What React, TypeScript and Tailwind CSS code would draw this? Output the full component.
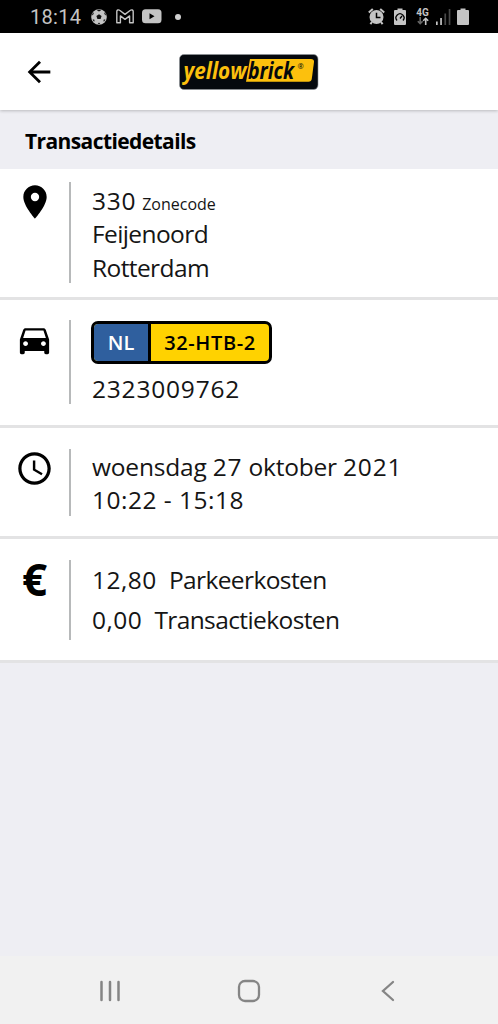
import React from 'react';
import { MdAccessTime, MdArrowBack, MdDirectionsCar, MdLocationOn } from 'react-icons/md';

function StatusBar() {
  return (
    <div className="h-[33px] shrink-0 bg-black text-[#c4c4c4] flex items-center justify-between pl-[30px] pr-[29px]">
      <div className="flex items-center">
        <span className="w-[53px] font-[Roboto,sans-serif] text-[20px] tracking-[0.3px] leading-none">18:14</span>
        <svg className="ml-[8px]" width="16" height="16" viewBox="0 0 16 16">
          <circle cx="8" cy="8" r="7.8" fill="currentColor" />
          <path d="M8 5.200l2.600 1.900-1 3H6.400l-1-3zM5.700 1.300L8 2.600l2.300-1.300L8 .8zM1 6.500l1.700-1.600-.2-1.600L1.200 5zM15 6.500l-1.700-1.600.2-1.600L14.800 5zM3.300 12.800l.2-2-1.900-.6.8 1.800zM12.700 12.800l-.2-2 1.900-.6-.8 1.800zM6.800 15L8 13.500 9.200 15z" fill="#111" />
        </svg>
        <svg className="ml-[9px]" width="18" height="15" viewBox="0 0 18 15" fill="none" stroke="currentColor" strokeWidth="1.400" strokeLinejoin="round">
          <path d="M.8 13.800V2.600C.8 1 2.500.4 3.600 1.300L9 5.400l5.400-4.100c1.100-.9 2.800-.3 2.800 1.300v11.200h-3.600V6.900L9 10.400 4.400 6.900v6.900z" />
        </svg>
        <svg className="ml-[8px]" width="20" height="15" viewBox="0 0 20 15">
          <rect y="0.300" width="19.500" height="14" rx="3.500" fill="currentColor" />
          <path d="M7.500 4.300v6l5-3z" fill="#000" />
        </svg>
        <span className="ml-[13px] size-[6px] rounded-full bg-[#d0d0d0]" />
      </div>
      <div className="flex items-center">
        <svg width="17" height="17" viewBox="0 0 17 17">
          <path d="M.8 4.600L4.800 1M16.200 4.600l-4-3.600M4 14l-1.600 2.200M13 14l1.600 2.200" stroke="currentColor" strokeWidth="2" />
          <circle cx="8.500" cy="9" r="7" fill="currentColor" />
          <path d="M8.500 4.800V9.500h4" fill="none" stroke="#000" strokeWidth="1.500" />
        </svg>
        <svg className="ml-[9px]" width="12" height="17" viewBox="0 0 12 17">
          <path d="M3.500.5h5V2H11a1 1 0 0 1 1 1v13a1 1 0 0 1-1 1H1a1 1 0 0 1-1-1V3a1 1 0 0 1 1-1h2.500z" fill="currentColor" />
          <path d="M3 12.500a4 4 0 1 1 6 0M6 10.500l2-2.500" fill="none" stroke="#000" strokeWidth="1.300" />
        </svg>
        <div className="ml-[10px] w-[13px] flex flex-col items-center">
          <span className="font-[Roboto,sans-serif] text-[10px] font-bold leading-[9px]">4G</span>
          <svg width="12" height="8" viewBox="0 0 12 8" fill="none" strokeWidth="1.600">
            <path d="M3.200 0v6.500M.8 4.200l2.400 2.400 2.400-2.400" stroke="#666" />
            <path d="M8.700 8V1.200M6.200 3.800l2.500-2.500 2.500 2.500" stroke="currentColor" />
          </svg>
        </div>
        <svg className="ml-[7px]" width="15" height="16" viewBox="0 0 15 16">
          <path d="M0 12.500h1.700V16H0zM4.200 9h1.700v7H4.200z" fill="currentColor" />
          <path d="M8.400 4.500h1.700V16H8.400zM12.700 0h1.700v16h-1.700z" fill="#484848" />
        </svg>
        <svg className="ml-[6px]" width="12" height="17" viewBox="0 0 12 17">
          <path d="M3.500.5h5V2H11a1 1 0 0 1 1 1v13a1 1 0 0 1-1 1H1a1 1 0 0 1-1-1V3a1 1 0 0 1 1-1h2.500z" fill="currentColor" />
        </svg>
      </div>
    </div>
  );
}

function Logo() {
  return (
    <svg width="140" height="36" viewBox="0 0 140 36" fontFamily="'Open Sans', sans-serif" fontWeight="700" fontStyle="italic">
      <rect x="0.500" y="0.500" width="138.500" height="35" rx="4.500" fill="#05090e" stroke="#8e9499" strokeWidth="0.600" />
      <path d="M71 5h61q3.300 0 3 3l-2.200 16.700q-.4 3-3.400 3H67z" fill="#fcc00d" />
      <text x="4.500" y="25" fontSize="22.500" textLength="63" lengthAdjust="spacingAndGlyphs" fill="#fcc00d">yellow</text>
      <text x="69" y="25" fontSize="22.500" textLength="46" lengthAdjust="spacingAndGlyphs" fill="#05090e">brick</text>
      <text x="118.500" y="15" fontSize="7.500" fontStyle="normal" fontWeight="400" fill="#05090e">®</text>
    </svg>
  );
}

function Num({ children }: { children: React.ReactNode }) {
  return <span className="tracking-[0.800px]">{children}</span>;
}

function Row({ icon, className, children }: { icon: React.ReactNode; className: string; children: React.ReactNode }) {
  return (
    <section className={`flex shrink-0 bg-white border-b-[3px] border-[#e3e3e4] ${className}`}>
      <div className="w-[69px] flex justify-center items-start">{icon}</div>
      <div className="flex-1 border-l-2 border-[#b7b9ba] pl-[21px] text-[24.500px] leading-[33.500px] tracking-[-0.600px] whitespace-nowrap">
        {children}
      </div>
    </section>
  );
}

function Cost({ amount, label }: { amount: string; label: string }) {
  return (
    <p className="-mt-px flex gap-[12px] leading-[41px]">
      <span className="tracking-[0.500px]">{amount}</span>
      <span>{label}</span>
    </p>
  );
}

function NavBar() {
  return (
    <nav className="mt-auto h-[68px] pt-[2px] shrink-0 bg-[#f1f1f1] flex justify-center items-center gap-[115px] text-[#858585]">
      <svg width="24" height="24" viewBox="0 0 24 24" stroke="currentColor" strokeWidth="2.500" strokeLinecap="round">
        <path d="M3.500 3v18M12 3v18M20.500 3v18" />
      </svg>
      <svg width="24" height="24" viewBox="0 0 24 24" fill="none" stroke="currentColor" strokeWidth="2.300">
        <rect x="2" y="2" width="20" height="20" rx="6" />
      </svg>
      <svg width="24" height="24" viewBox="0 0 24 24" fill="none" stroke="currentColor" strokeWidth="2.300" strokeLinecap="round">
        <path d="M17 3l-10 9 10 9" />
      </svg>
    </nav>
  );
}

export default function App() {
  return (
    <div className="w-full h-screen flex flex-col overflow-hidden bg-[#eeeef3] text-[#151515] font-[Open_Sans,sans-serif]">
      <StatusBar />
      <header className="h-[77px] shrink-0 bg-white shadow-[0_1px_3px_rgba(0,0,0,0.220)] z-10 grid grid-cols-[1fr_auto_1fr] items-center">
        <MdArrowBack className="ml-[22px] mt-px text-black" size={34} />
        <Logo />
      </header>
      <h1 className="h-[59px] shrink-0 pl-[25px] pt-[4px] flex items-center text-[21px] font-bold tracking-[-0.600px] text-black">
        Transactiedetails
      </h1>

      <Row className="h-[131px] pt-[13px] pb-[14px]" icon={<MdLocationOn className="text-black" size={40} />}>
        <p className="h-[35px] pt-[2px]">
          <Num>330</Num> <span className="text-[16px] leading-none tracking-normal">Zonecode</span>
        </p>
        <p>Feijenoord</p>
        <p>Rotterdam</p>
      </Row>

      <Row className="h-[128px] pt-[20px] pb-[21px]" icon={<MdDirectionsCar className="text-black" size={39} />}>
        <div className="flex w-[181px] h-[43px] -ml-px mt-px mb-[8px] border-[3px] border-black rounded-[7px] overflow-hidden bg-[#ffd200] text-[20px] font-semibold leading-[38px] text-black">
          <span className="w-[57px] bg-[#2f5f9e] text-white text-center tracking-normal border-r-[3px] border-black">NL</span>
          <span className="flex-1 text-center tracking-[0.600px]">32-HTB-2</span>
        </div>
        <p><Num>2323009762</Num></p>
      </Row>

      <Row className="h-[111px] pt-[21px] pb-[20px]" icon={<MdAccessTime className="text-black" size={39} />}>
        <p className="pt-px tracking-[-0.200px]">
          woensdag <Num>27</Num> oktober <Num>2021</Num>
        </p>
        <p className="-mt-px tracking-[0.500px]">10:22 - 15:18</p>
      </Row>

      <Row
        className="h-[124px] pt-[21px] pb-[20px]"
        icon={<span className="text-black text-[44px] font-bold leading-[39px]">€</span>}
      >
        <Cost amount="12,80" label="Parkeerkosten" />
        <Cost amount="0,00" label="Transactiekosten" />
      </Row>
      <NavBar />
    </div>
  );
}
